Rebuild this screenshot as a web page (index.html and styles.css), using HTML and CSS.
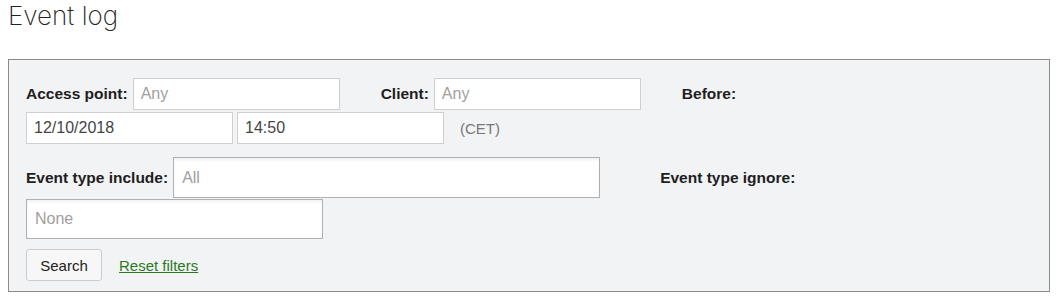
FILE: index.html
```html
<!DOCTYPE html>
<html lang="en">
<head>
  <meta charset="UTF-8" />
  <title>Event log</title>
  <link rel="stylesheet" href="styles.css">
</head>
<body>
  <h1 class="page-title">Event log</h1>

  <form class="filters">
    <div class="filter-row">
      <label class="field-label" for="ap">Access point:</label>
      <input type="text" id="ap" class="text-input" placeholder="Any" />

      <label class="field-label spaced" for="client">Client:</label>
      <input type="text" id="client" class="text-input" placeholder="Any" />

      <label class="field-label spaced" for="before-date">Before:</label>
      <div class="datetime">
        <input type="text" id="before-date" class="text-input" value="12/10/2018" />
        <input type="text" id="before-time" class="text-input" value="14:50" />
        <span class="tz">(CET)</span>
      </div>
    </div>

    <div class="filter-row types">
      <label class="field-label" for="type-inc">Event type include:</label>
      <input type="text" id="type-inc" class="tag-input include" placeholder="All" />

      <label class="field-label spaced-lg" for="type-ign">Event type ignore:</label>
      <input type="text" id="type-ign" class="tag-input ignore" placeholder="None" />
    </div>

    <div class="actions">
      <button type="button" class="search-btn">Search</button>
      <a href="#" class="reset-link">Reset filters</a>
    </div>
  </form>
</body>
</html>
```

FILE: styles.css
```css
* { box-sizing: border-box; }

body {
  margin: 0 8px;
  font-family: "Liberation Sans", Arial, sans-serif;
  color: #222;
  background: #fff;
}

.page-title {
  margin: 0 0 27px;
  font-family: Inter, "Open Sans", sans-serif;
  font-weight: 200;
  font-size: 26px;
  line-height: 32px;
  color: #222;
}

.filters {
  width: 1042px;
  background: #f2f3f5;
  border: 1px solid #8a8a8a;
  padding: 18px 17px 10px;
}

.filter-row {
  display: flex;
  flex-wrap: wrap;
  align-items: center;
  row-gap: 2px;
}
.filter-row.types { margin-top: 13px; row-gap: 1px; }

.field-label {
  font-weight: 700;
  font-size: 15.5px;
  color: #1e1e1e;
  margin-right: 5px;
}
.field-label.spaced { margin-left: 41px; }
.field-label.spaced-lg { margin-left: 60px; }

input { font-family: inherit; font-size: 16px; color: #444; }
input::placeholder { color: #a0a0a0; }

.text-input {
  width: 207px;
  height: 32px;
  padding: 0 7px;
  border: 1px solid #cfcfcf;
  border-radius: 0;
  background: #fff;
}

.datetime { display: flex; align-items: center; gap: 4px; }
.tz { margin-left: 12px; font-size: 15px; color: #777; }

.tag-input {
  height: 41px;
  padding: 0 8px;
  border: 1px solid #b0b0b0;
  background: #fff;
  box-shadow: inset 0 2px 3px rgba(0,0,0,0.06);
}
.tag-input.include { width: 427px; }
.tag-input.ignore { width: 297px; height: 40px; }

.actions {
  display: flex;
  align-items: center;
  margin-top: 10px;
}
.search-btn {
  width: 76px;
  height: 32px;
  font-family: inherit;
  font-size: 15px;
  color: #222;
  background: #f7f7f7;
  border: 1px solid #cdcdcd;
  border-radius: 3px;
}
.reset-link {
  margin-left: 17px;
  font-size: 15px;
  color: #2c7a1d;
}
```
